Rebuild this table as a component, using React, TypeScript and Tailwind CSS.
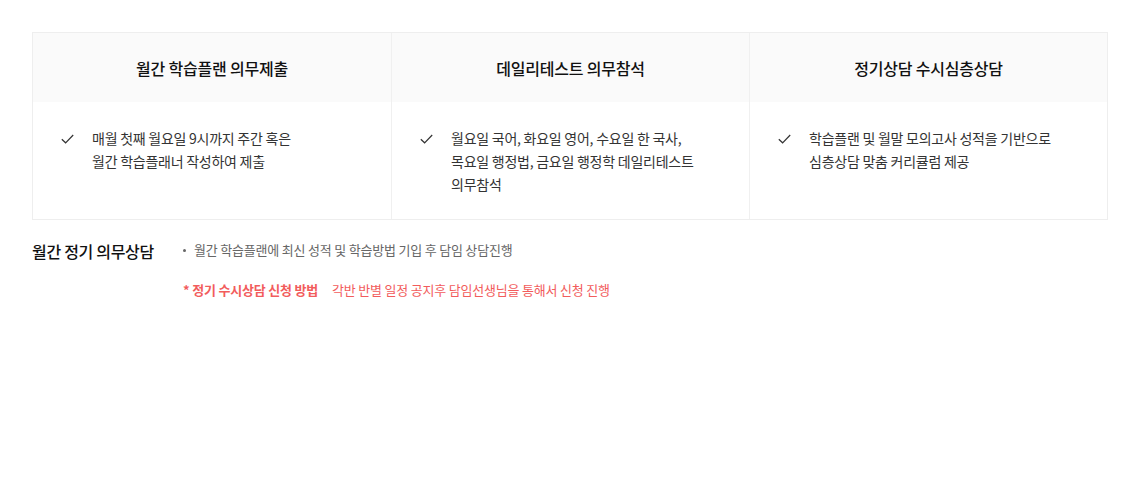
const columns = [
  {
    title: '월간 학습플랜 의무제출',
    lines: ['매월 첫째 월요일 9시까지 주간 혹은', '월간 학습플래너 작성하여 제출'],
  },
  {
    title: '데일리테스트 의무참석',
    lines: ['월요일 국어, 화요일 영어, 수요일 한 국사,', '목요일 행정법, 금요일 행정학 데일리테스트', '의무참석'],
  },
  {
    title: '정기상담 수시심층상담',
    lines: ['학습플랜 및 월말 모의고사 성적을 기반으로', '심층상담 맞춤 커리큘럼 제공'],
  },
];

function Check() {
  return (
    <svg className="w-[13px] h-[10px] mt-[7px] shrink-0" viewBox="0 0 13 10" fill="none" stroke="#333" strokeWidth={1.2}>
      <path d="M0.8 5.2L4.6 8.8L12.2 1" />
    </svg>
  );
}

export default function App() {
  return (
    <div
      className="w-[1140px] h-[484px] bg-white px-8 pt-8 text-[#222]"
      style={{ fontFamily: '"Noto Sans CJK KR", "Noto Sans", sans-serif' }}
    >
      {/* Duty table */}
      <div className="grid grid-cols-3 border border-[#eeeeee]">
        {columns.map((col, i) => (
          <div key={col.title} className={i > 0 ? 'border-l border-[#f0f0f0]' : ''}>
            <div className="h-[69px] bg-[#fafafa] flex items-center justify-center text-[16px] font-medium text-[#111] tracking-[-0.2px]">
              {col.title}
            </div>
            <div className="flex gap-[18px] pl-[28px] pt-[25px] pb-[23px] text-[14px] leading-[23px] text-[#333] tracking-[-0.25px]">
              <Check />
              <div>
                {col.lines.map((line) => (
                  <div key={line}>{line}</div>
                ))}
              </div>
            </div>
          </div>
        ))}
      </div>

      {/* Monthly counseling */}
      <div className="flex mt-[19px]">
        <div className="w-[151px] text-[16px] font-medium text-[#111] leading-[24px] tracking-[-0.3px]">
          월간 정기 의무상담
        </div>
        <div className="pt-[1px]">
          <div className="flex items-center text-[13px] text-[#666] leading-[20px] tracking-[-0.2px]">
            <span className="w-[3px] h-[3px] rounded-full bg-[#666] mr-[8px]" />
            월간 학습플랜에 최신 성적 및 학습방법 기입 후 담임 상담진행
          </div>
          <div className="flex mt-[20px] text-[13px] leading-[20px] text-[#f25c5c] tracking-[-0.2px]">
            <span className="font-bold w-[149px]">* 정기 수시상담 신청 방법</span>
            <span>각반 반별 일정 공지후 담임선생님을 통해서 신청 진행</span>
          </div>
        </div>
      </div>
    </div>
  );
}
